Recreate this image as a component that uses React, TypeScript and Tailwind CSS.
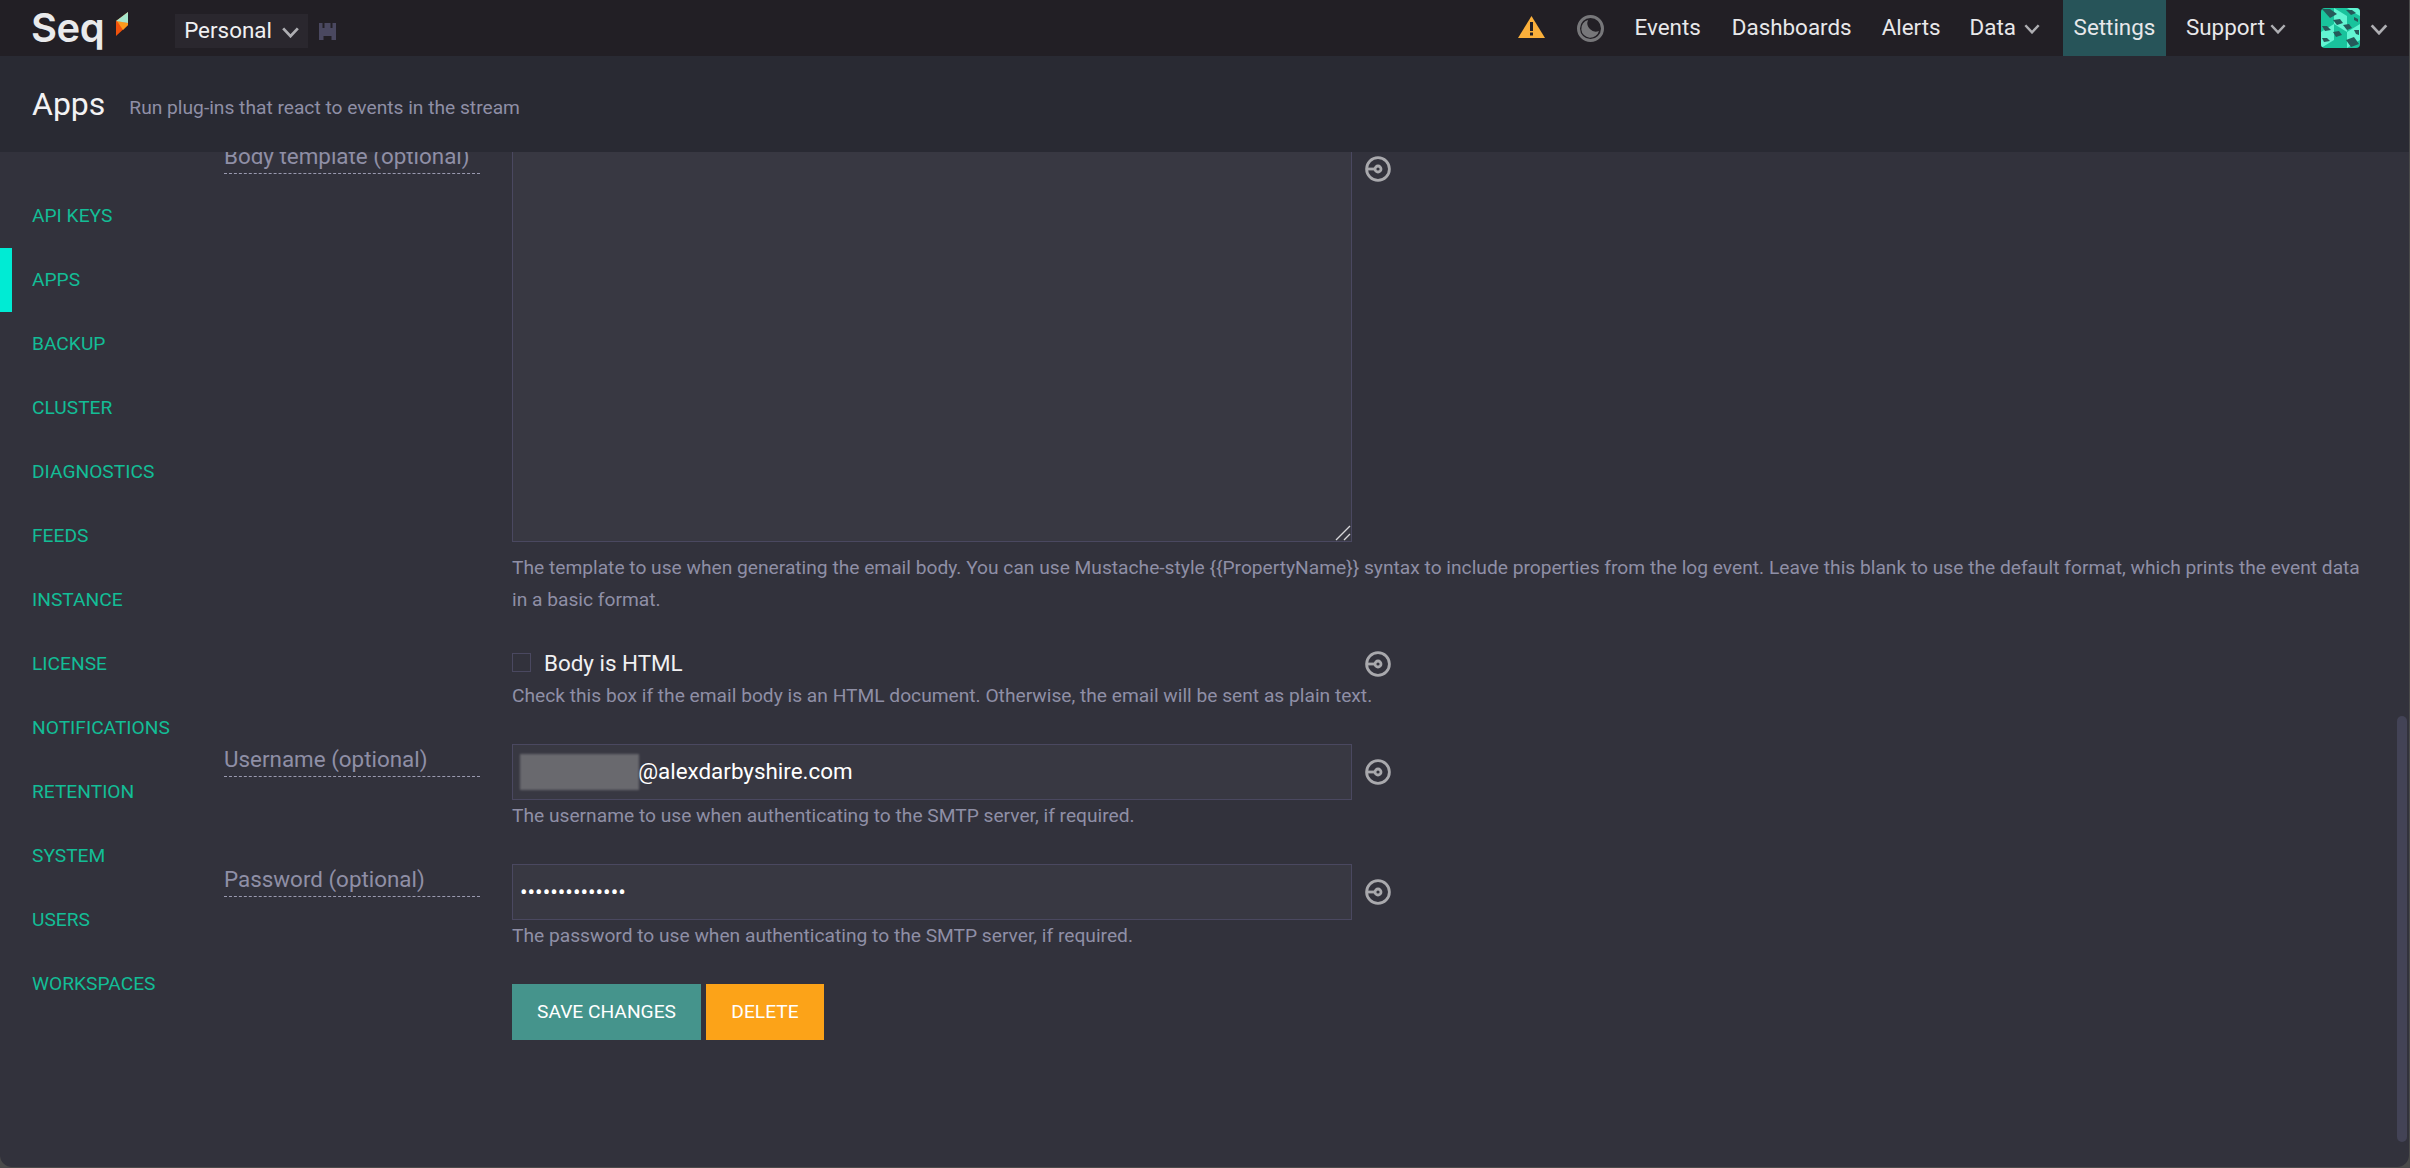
import React from 'react';

const sideItems = ['API KEYS', 'APPS', 'BACKUP', 'CLUSTER', 'DIAGNOSTICS', 'FEEDS', 'INSTANCE', 'LICENSE', 'NOTIFICATIONS', 'RETENTION', 'SYSTEM', 'USERS', 'WORKSPACES'];

const templateHelp = 'The template to use when generating the email body. You can use Mustache-style {{PropertyName}} syntax to include properties from the log event. Leave this blank to use the default format, which prints the event data in a basic format.';

const Chevron = ({ className }: { className: string }) => (
  <svg viewBox="0 0 18 12" className={className} fill="none" stroke="currentColor" strokeWidth="3">
    <path d="M1 1.5 L9 10 L17 1.5" />
  </svg>
);

const ResetIcon = () => (
  <svg viewBox="0 0 26 26" className="w-[26px] h-[26px] shrink-0 text-[#a9a9ad]" fill="none" stroke="currentColor" strokeWidth="2.8">
    <circle cx="13" cy="13" r="11.4" />
    <circle cx="13" cy="13" r="3" />
    <path d="M1.5 13 H10" />
  </svg>
);

const Avatar = () => (
  <svg viewBox="0 0 39 40" className="w-[39px] h-[40px] rounded-[4px] shrink-0">
    <rect width="39" height="40" fill="#19c39c" />
    <path d="M13 0 L26 8 L26 24 L39 16 L39 32 L26 40 L26 24 L13 16 Z" fill="#62f5d2" />
    <path d="M0 24 L13 16 L13 32 L0 40 Z" fill="#62f5d2" />
    <path d="M26 0 L39 0 L39 8 L32 4 Z" fill="#62f5d2" />
    <g fill="#265a5a">
      <path d="M1 1 L9 1 L16 6 L9 10 Z" />
      <path d="M25 2 L31 2 L35 5 L30 7 Z" />
      <path d="M33 9 L37 11 L37 14 L33 12 Z" />
      <path d="M12 12 L19 11 L22 15 L16 17 Z" />
      <path d="M22 17 L28 16 L31 20 L26 22 Z" />
      <path d="M1 18 L6 18 L10 22 L4 23 Z" />
      <path d="M33 22 L38 22 L38 27 L35 26 Z" />
      <path d="M12 24 L18 23 L21 27 L15 29 Z" />
      <path d="M1 30 L6 30 L9 33 L3 34 Z" />
      <path d="M25 32 L33 29 L38 36 L30 39 Z" />
    </g>
  </svg>
);

const Field = ({ label, children }: { label?: string; children: React.ReactNode }) => (
  <div className="flex mb-[32px]">
    <div className="w-[288px] shrink-0 pr-[32px]">
      {label && (
        <div className="h-[33px] border-b border-dashed border-[#9a9ab0] text-[#8f8fa6] text-[22.4px] leading-[31px]">{label}</div>
      )}
    </div>
    <div className="flex-1 min-w-0">{children}</div>
  </div>
);

const Help = ({ children }: { children: React.ReactNode }) => (
  <p className="text-[#8f8fa6] text-[19.2px] leading-[32px]">{children}</p>
);

const TextRow = ({ children }: { children: React.ReactNode }) => (
  <div className="flex items-center gap-[13px]">
    <div className="w-[840px] h-[56px] border border-[#4a4860] bg-[#383842] flex items-center pl-[7px] text-white text-[22.4px]">
      {children}
    </div>
    <ResetIcon />
  </div>
);

export default function App() {
  return (
    <div className="h-screen w-full bg-[#4a4a4a] pr-px pb-px">
      <div className="h-full overflow-hidden flex flex-col bg-[#32323c] font-['Roboto',sans-serif] relative rounded-b-[12px]">
        {/* top bar */}
        <div className="h-[56px] shrink-0 bg-[#221f25] flex items-center">
          <span className="ml-[31px] text-[40px] leading-none font-semibold text-[#e9eaec] font-['Inter',sans-serif] tracking-[-0.5px]">Seq</span>
          <svg viewBox="0 0 12 24" className="ml-[12px] mb-[9px] w-[12px] h-[24px]">
            <path d="M0 9 L12 0 V13 L0 24 Z" fill="#f0520c" />
            <path d="M1 9 L12 11 V13 L7 18 Z" fill="#fb9a1a" />
            <path d="M12 0 V11 L0 9 Z" fill="#a6e6cb" />
          </svg>
          <div className="ml-[47px] mt-[6px] h-[34px] w-[133px] bg-[#2a272e] flex items-center pl-[9px] text-[#f0f0f2] text-[22.4px]">
            Personal
            <Chevron className="w-[17px] h-[11px] ml-[10px] mt-[2px] text-[#aeaeb2]" />
          </div>
          <svg viewBox="0 0 17 17" className="ml-[11px] mt-[6px] w-[17px] h-[17px] text-[#4a4860]" fill="currentColor">
            <path d="M0 0 H3.5 V5 H5.5 V0 H11.5 V5 H13.5 V0 H17 V17 H12.5 V13 H4.5 V17 H0 Z" />
          </svg>

          <div className="ml-auto flex items-center h-full text-[#e8e8ea] text-[22.4px]">
            <svg viewBox="0 0 27 22" className="w-[27px] h-[22px] mb-[2px]">
              <path d="M13.5 0 L27 22 H0 Z" fill="#fbb03b" />
              <rect x="12" y="6" width="3" height="9" fill="#221f25" />
              <rect x="12" y="16.5" width="3" height="3" fill="#221f25" />
            </svg>
            <svg viewBox="0 0 27 27" className="ml-[32px] w-[27px] h-[27px]">
              <circle cx="13.5" cy="13.5" r="12" fill="none" stroke="#77777a" strokeWidth="3" />
              <path d="M11 5 A9 9 0 1 0 22 16 A8.5 8.5 0 0 1 11 5 Z" fill="#77777a" />
            </svg>
            <span className="ml-[31px]">Events</span>
            <span className="ml-[31px]">Dashboards</span>
            <span className="ml-[30px]">Alerts</span>
            <span className="ml-[29px] flex items-center">Data<Chevron className="w-[16px] h-[10px] ml-[8px] mt-[3px] text-[#aeaeb2]" /></span>
            <span className="ml-[23px] w-[103px] h-full bg-[#275459] flex items-center justify-center">Settings</span>
            <span className="ml-[20px] flex items-center">Support<Chevron className="w-[16px] h-[10px] ml-[5px] mt-[3px] text-[#aeaeb2]" /></span>
            <span className="ml-[35px]"><Avatar /></span>
            <Chevron className="w-[18px] h-[11px] ml-[10px] mr-[21px] mt-[2px] text-[#aeaeb2]" />
          </div>
        </div>

        {/* page header */}
        <div className="h-[96px] shrink-0 z-10 bg-[#292a33] flex items-center pl-[32px]">
          <h1 className="text-[32px] leading-none text-[#f2f2f4]">Apps</h1>
          <span className="ml-[24px] mt-[9px] text-[19.2px] text-[#8f8fa6]">Run plug-ins that react to events in the stream</span>
        </div>

        <div className="flex-1 flex min-h-0 relative">
          {/* settings nav */}
          <nav className="w-[224px] shrink-0 pt-[32px]">
            {sideItems.map((s) => (
              <div key={s} className={`h-[64px] flex items-center text-[#13bd96] text-[19.2px] ${s === 'APPS' ? 'border-l-[12px] border-[#00ebd4] pl-[20px]' : 'pl-[32px]'}`}>
                {s}
              </div>
            ))}
          </nav>

          {/* form, scrolled down so the first row sits under the header */}
          <div className="flex-1 min-w-0 -mt-[11px] pr-[40px]">
            <Field label="Body template (optional)">
              <div className="flex items-start gap-[13px]">
                <div className="relative">
                  <textarea className="block w-[840px] h-[401px] border border-[#4a4860] bg-[#383842] resize-none" />
                  {/* resize grip */}
                  <svg viewBox="0 0 16 16" className="absolute right-[1px] bottom-[1px] w-[16px] h-[16px] text-[#d8d8da]" fill="none" stroke="currentColor" strokeWidth="1.4">
                    <path d="M1 15 L15 1 M9 15 L15 9" />
                  </svg>
                </div>
                <div className="mt-[15px]"><ResetIcon /></div>
              </div>
              <div className="mt-[10px]">
                <Help>{templateHelp}</Help>
              </div>
            </Field>
            <Field>
              <div className="h-[32px] flex items-center">
                <div className="w-[840px] flex items-center">
                  <span className="w-[19px] h-[19px] mb-[3px] border border-[#4a4860] bg-[#32323c]" />
                  <span className="ml-[13px] text-[22.4px] text-[#f0f0f2]">Body is HTML</span>
                </div>
                <div className="ml-[13px]"><ResetIcon /></div>
              </div>
              <Help>Check this box if the email body is an HTML document. Otherwise, the email will be sent as plain text.</Help>
            </Field>
            <Field label="Username (optional)">
              <TextRow>
                <span className="w-[119px] h-[36px] bg-[#69696e] blur-[1px]" />
                <span className="-ml-[1px]">@alexdarbyshire.com</span>
              </TextRow>
              <Help>The username to use when authenticating to the SMTP server, if required.</Help>
            </Field>
            <Field label="Password (optional)">
              <TextRow>
                <span className="leading-none">••••••••••••••</span>
              </TextRow>
              <Help>The password to use when authenticating to the SMTP server, if required.</Help>
            </Field>
            <div className="flex ml-[288px] gap-[5px] text-[19.2px] text-white">
              <button className="w-[189px] h-[56px] bg-[#45948c]">SAVE CHANGES</button>
              <button className="w-[118px] h-[56px] bg-[#fca318]">DELETE</button>
            </div>
          </div>

          {/* scrollbar thumb */}
          <div className="absolute right-[2px] top-[564px] w-[10px] h-[426px] rounded-[5px] bg-[#434356]" />
        </div>
      </div>
    </div>
  );
}
